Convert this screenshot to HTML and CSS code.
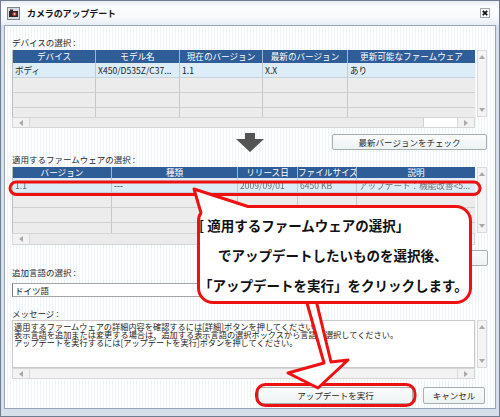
FILE: index.html
```html
<!DOCTYPE html>
<html lang="ja">
<head>
<meta charset="utf-8">
<title>カメラのアップデート</title>
<link rel="stylesheet" href="styles.css">
</head>
<body>
<div class="page">
  <div class="window">
    <div class="titlebar">
      <svg class="appicon" width="13" height="13" viewBox="0 0 13 13">
        <rect x="0.5" y="0.5" width="12" height="12" fill="#d9dcdf" stroke="#7d8590"/>
        <rect x="2" y="4" width="9" height="6" fill="#2a2a2a"/>
        <rect x="3" y="2.5" width="3" height="2" fill="#2a2a2a"/>
        <circle cx="7.5" cy="7" r="2" fill="#e23a2e"/>
        <circle cx="7.5" cy="7" r="0.8" fill="#fff"/>
      </svg>
      <span class="title">カメラのアップデート</span>
      <svg class="close" width="10" height="10" viewBox="0 0 10 10">
        <rect x="0.5" y="0.5" width="9" height="9" fill="#f5f6f7" stroke="#a4a9b0"/>
        <path d="M2.8 2.8 L7.2 7.2 M7.2 2.8 L2.8 7.2" stroke="#111" stroke-width="1.7"/>
      </svg>
    </div>
    <div class="client">
      <div class="inner">
        <div class="label first">デバイスの選択 :</div>
        <div class="grid g1">
          <div class="data">
            <div class="row head">
              <div class="c">デバイス</div><div class="c">モデル名</div><div class="c">現在のバージョン</div><div class="c">最新のバージョン</div><div class="c">更新可能なファームウェア</div>
            </div>
            <div class="row sel">
              <div class="c">ボディ</div><div class="c">X450/D535Z/C37...</div><div class="c">1.1</div><div class="c">X.X</div><div class="c">あり</div>
            </div>
            <div class="row"><div class="c"></div><div class="c"></div><div class="c"></div><div class="c"></div><div class="c"></div></div>
            <div class="row"><div class="c"></div><div class="c"></div><div class="c"></div><div class="c"></div><div class="c"></div></div>
            <div class="row"><div class="c"></div><div class="c"></div><div class="c"></div><div class="c"></div><div class="c"></div></div>
          </div>
          <div class="vscroll">
            <div class="vbar">
              <svg class="vbtn" width="6" height="4" viewBox="0 0 6 4"><polygon points="0,4 6,4 3,0" fill="#a9a9a9"/></svg>
              <svg class="vbtn" width="6" height="4" viewBox="0 0 6 4"><polygon points="0,0 6,0 3,4" fill="#a9a9a9"/></svg>
            </div>
          </div>
          <div class="hscroll">
            <div class="harr"><svg width="4" height="6" viewBox="0 0 4 6"><polygon points="4,0 4,6 0,3" fill="#a9a9a9"/></svg></div>
            <div class="thumb"></div>
            <div class="track"></div>
            <div class="harr r"><svg width="4" height="6" viewBox="0 0 4 6"><polygon points="0,0 0,6 4,3" fill="#a9a9a9"/></svg></div>
          </div>
          <div class="corner"></div>
        </div>

        <div class="midrow">
          <svg class="downarrow" width="28" height="19" viewBox="0 0 28 19">
            <polygon points="9,0 19,0 19,6 28,6 14,19 0,6 9,6" fill="#545454"/>
          </svg>
          <div class="btn check">最新バージョンをチェック</div>
        </div>

        <div class="label">適用するファームウェアの選択 :</div>
        <div class="grid g2">
          <div class="data">
            <div class="row head">
              <div class="c">バージョン</div><div class="c">種類</div><div class="c">リリース日</div><div class="c">ファイルサイズ</div><div class="c">説明</div>
            </div>
            <div class="row sel">
              <div class="c blur">1.1</div><div class="c">---</div><div class="c blur">2009/09/01</div><div class="c blur">6450 KB</div><div class="c blur">アップデート：機能改善&lt;5...</div>
            </div>
            <div class="row"><div class="c"></div><div class="c"></div><div class="c"></div><div class="c"></div><div class="c"></div></div>
            <div class="row"><div class="c"></div><div class="c"></div><div class="c"></div><div class="c"></div><div class="c"></div></div>
            <div class="row"><div class="c"></div><div class="c"></div><div class="c"></div><div class="c"></div><div class="c"></div></div>
          </div>
          <div class="vscroll">
            <div class="vbar">
              <svg class="vbtn" width="6" height="4" viewBox="0 0 6 4"><polygon points="0,4 6,4 3,0" fill="#a9a9a9"/></svg>
              <svg class="vbtn" width="6" height="4" viewBox="0 0 6 4"><polygon points="0,0 6,0 3,4" fill="#a9a9a9"/></svg>
            </div>
          </div>
          <div class="hscroll">
            <div class="harr"><svg width="4" height="6" viewBox="0 0 4 6"><polygon points="4,0 4,6 0,3" fill="#a9a9a9"/></svg></div>
            <div class="thumb"></div>
            <div class="track"></div>
            <div class="harr r"><svg width="4" height="6" viewBox="0 0 4 6"><polygon points="0,0 0,6 4,3" fill="#a9a9a9"/></svg></div>
          </div>
          <div class="corner"></div>
        </div>

        <div class="detailrow">
          <div class="btn detail"></div>
        </div>

        <div class="label">追加言語の選択 :</div>
        <div class="select">ドイツ語</div>

        <div class="label msglabel">メッセージ :</div>
        <div class="grid gm">
          <div class="msg">適用するファームウェアの詳細内容を確認するには[詳細]ボタンを押してください。<br>表示言語を追加または変更する場合は、追加する表示言語の選択ボックスから言語を選択してください。<br>アップデートを実行するには[アップデートを実行]ボタンを押してください。</div>
          <div class="vscroll">
            <div class="vbar">
              <svg class="vbtn" width="6" height="4" viewBox="0 0 6 4"><polygon points="0,4 6,4 3,0" fill="#a9a9a9"/></svg>
              <svg class="vbtn" width="6" height="4" viewBox="0 0 6 4"><polygon points="0,0 6,0 3,4" fill="#a9a9a9"/></svg>
            </div>
          </div>
          <div class="hscroll">
            <div class="harr"><svg width="4" height="6" viewBox="0 0 4 6"><polygon points="4,0 4,6 0,3" fill="#a9a9a9"/></svg></div>
            <div class="track full"></div>
            <div class="harr r"><svg width="4" height="6" viewBox="0 0 4 6"><polygon points="0,0 0,6 4,3" fill="#a9a9a9"/></svg></div>
          </div>
          <div class="corner"></div>
        </div>

        <div class="buttons">
          <div class="btn update">アップデートを実行</div>
          <div class="btn cancel">キャンセル</div>
        </div>
      </div>
    </div>
  </div>

  <svg class="overlay" width="500" height="417" viewBox="0 0 500 417">
    <rect x="10" y="182" width="470" height="12.5" rx="6.25" fill="none" stroke="#ee1111" stroke-width="3"/>
    <rect x="256.5" y="384.5" width="158.5" height="21" rx="9" fill="none" stroke="#ee1111" stroke-width="3"/>
    <polygon points="305,296 315,296 331,362 348,360 318,388 288,373 324,363" fill="#fff" stroke="#ee1111" stroke-width="3" stroke-linejoin="round"/>
    <path d="M201 213 L194 189 L248 206.5 L456 206.5 A14.5 14.5 0 0 1 470.5 221 L470.5 288 A14.5 14.5 0 0 1 456 302.5 L213 302.5 A14.5 14.5 0 0 1 198.5 288 L198.5 221 Q198.5 216 201 213 Z" fill="#fff" stroke="#ee1111" stroke-width="3" stroke-linejoin="round"/>
  </svg>
  <div class="callout">
    <div class="cl">[ 適用するファームウェアの選択」</div>
    <div class="cl indent">でアップデートしたいものを選択後、</div>
    <div class="cl">「アップデートを実行」をクリックします。</div>
  </div>
</div>
</body>
</html>
```

FILE: styles.css
```css
* { box-sizing: border-box; }

body {
  margin: 0;
  background: #ffffff;
  font-family: "Noto Sans CJK JP", "Noto Sans", sans-serif;
  color: #222;
}

.page {
  position: relative;
  width: 500px;
  height: 417px;
}

.window {
  width: 500px;
  height: 417px;
  border: 1px solid #6f7d90;
  display: flex;
  flex-direction: column;
  overflow: hidden;
  background: #dfe7f0;
}

.titlebar {
  height: 24px;
  flex: none;
  display: flex;
  align-items: center;
  padding: 0 9px 0 6px;
  background: linear-gradient(#e9eef4, #fcfdfe 25%, #f7f9fb 70%, #e8edf3);
}

.appicon { flex: none; }

.title {
  margin-left: 7px;
  font-size: 9px;
  font-weight: bold;
  color: #151515;
  letter-spacing: -0.1px;
}

.close {
  margin-left: auto;
  flex: none;
}

.client {
  flex: 1;
  display: flex;
  border: 3px solid #d6e0eb;
  border-top: 0;
  border-bottom-width: 7px;
}

.inner {
  flex: 1;
  display: flex;
  flex-direction: column;
  border: 1px solid #95a4b8;
  padding: 0 7px;
  background: repeating-linear-gradient(90deg, #ffffff 0, #ffffff 2px, #edf4fa 2px, #edf4fa 3px);
}

.label {
  height: 12px;
  line-height: 12px;
  font-size: 8.5px;
  color: #2a2a2a;
  white-space: nowrap;
}
.label.first { margin-top: 10px; }
.label.msglabel { margin-top: 10px; }

/* grids */
.grid {
  display: grid;
  grid-template-columns: 463px 13px;
  grid-template-rows: 67px 11px;
  margin-top: 2px;
}
.g2 { grid-template-rows: 66px 12px; }
.gm { grid-template-rows: 48px 11px; margin-top: 1px; }

.data {
  overflow: hidden;
  border-left: 1px solid #bdbdbd;
  background: #ececec;
}

.row {
  display: grid;
  height: 15px;
  border-bottom: 1px solid #d0d0d0;
  font-size: 8.6px;
  line-height: 14px;
  background: #ececec;
}
.g1 .row { grid-template-columns: 83px 84px 83px 85px 127px; }
.g2 .row { grid-template-columns: 99px 126px 60px 59px 118px; }

.row .c {
  border-right: 1px solid #c7c7c7;
  padding-left: 2px;
  white-space: nowrap;
  overflow: hidden;
  color: #222;
}
.row .c:last-child { border-right: 0; }

.row.head {
  height: 13px;
  line-height: 13px;
  background: #2e5d97;
  border-bottom: 0;
}
.g2 .row.head { height: 11px; line-height: 11px; }
.row.head .c {
  color: #ffffff;
  text-align: center;
  padding-left: 0;
  border-right: 1px solid #9fb4cf;
}
.row.head .c:last-child { border-right: 0; }

.row.sel {
  background: #dcedf7;
  border-bottom: 1px solid #c4d3de;
}

.c.blur {
  color: #6d6d6d;
  filter: blur(0.6px);
}

.vscroll {
  padding-left: 2px;
  padding-right: 1px;
}
.vbar {
  height: 100%;
  border: 1px solid #dadada;
  background: #f4f4f4;
  display: flex;
  flex-direction: column;
  justify-content: space-between;
  align-items: center;
  padding: 4px 0;
}

.hscroll {
  display: flex;
  border: 1px solid #d6d6d6;
  background: #ffffff;
}
.harr {
  width: 17px;
  flex: none;
  display: flex;
  align-items: center;
  justify-content: center;
  background: #f2f2f2;
  border-right: 1px solid #dadada;
}
.harr.r {
  border-right: 0;
  border-left: 1px solid #dadada;
}
.thumb {
  width: 394px;
  flex: none;
  background: #ebebeb;
  border-right: 1px solid #d2d2d2;
}
.track { flex: 1; background: #ffffff; }
.track.full { background: #f3f3f3; }

.corner { background: transparent; }

/* middle row */
.midrow {
  display: flex;
  height: 20px;
  margin-top: 5px;
}
.downarrow {
  margin-left: 224px;
  flex: none;
}

.btn {
  height: 16px;
  font-size: 8.5px;
  line-height: 14px;
  text-align: center;
  color: #262626;
  background: linear-gradient(#fbfcfc, #edf2f2);
  border: 1px solid #a7aeae;
  border-radius: 2px;
  white-space: nowrap;
}
.btn.check {
  width: 155px;
  margin-left: auto;
  margin-right: 1px;
  margin-top: 1px;
}

.detailrow {
  display: flex;
  height: 16px;
  margin-top: 5px;
}
.btn.detail {
  width: 96px;
  margin-left: auto;
}

.select {
  width: 330px;
  height: 14px;
  margin-top: 5px;
  border: 1px solid #a5a5a5;
  border-left-color: #7a7a7a;
  background: #ffffff;
  font-size: 8.5px;
  line-height: 12px;
  padding-left: 2px;
}

.msg {
  background: #ffffff;
  border: 1px solid #c9c9c9;
  font-size: 8.2px;
  line-height: 8px;
  padding: 1px 0 0 1px;
  white-space: nowrap;
  overflow: hidden;
  color: #222;
}

.buttons {
  display: flex;
  justify-content: flex-end;
  gap: 10px;
  margin-top: 8px;
  padding-right: 3px;
}
.btn.update { width: 155px; height: 17px; line-height: 15px; }
.btn.cancel { width: 62px; height: 17px; line-height: 15px; }

/* annotation overlay */
.overlay {
  position: absolute;
  left: 0;
  top: 0;
  pointer-events: none;
}

.callout {
  position: absolute;
  left: 199px;
  top: 210px;
  width: 272px;
  font-size: 13.5px;
  font-weight: bold;
  line-height: 30px;
  color: #111;
  white-space: nowrap;
}
.cl.indent { padding-left: 19px; }
```
